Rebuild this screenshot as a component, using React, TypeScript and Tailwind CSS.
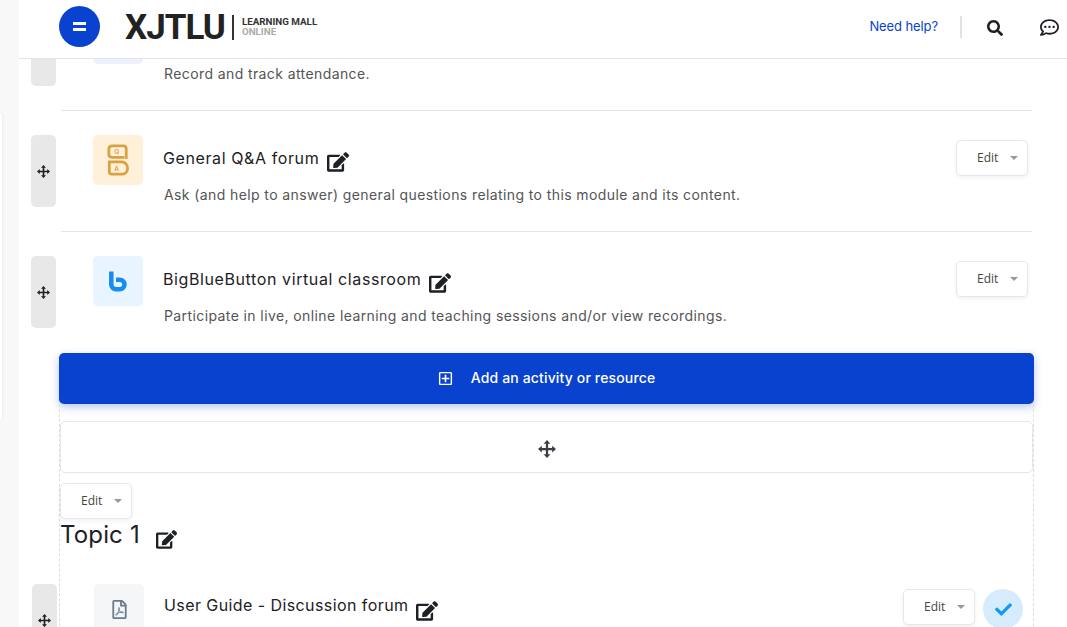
import React from "react";
import { FaEdit, FaSearch, FaRegCommentDots, FaCheck, FaRegPlusSquare, FaRegFilePdf } from "react-icons/fa";

const font = "font-['Inter',sans-serif]";

const MoveIcon = ({ size = 14 }: { size?: number }) => (
  <svg width={size} height={size} viewBox="0 0 16 16" fill="currentColor">
    <path d="M8 0 11 3.4H9V7h3.6V5L16 8l-3.4 3V9H9v3.6h2L8 16l-3-3.4h2V9H3.4v2L0 8l3.4-3v2H7V3.4H5z" />
  </svg>
);

const EditButton = () => (
  <div className="flex h-[36px] w-[72px] shrink-0 items-center rounded-[5px] border border-[#e6e6f0] bg-white pl-[20px] text-[12px] text-[#444] shadow-[0_2px_4px_rgba(0,0,0,0.06)]">
    <span className="font-['Open_Sans',sans-serif]">Edit</span>
    <span className="ml-[12px] h-0 w-0 border-x-[4px] border-t-[4px] border-x-transparent border-t-[#999]" />
  </div>
);

const QaIcon = () => (
  <svg width="22" height="32" viewBox="0 0 24 34" fill="none" stroke="#d9a044" strokeWidth="3">
    <path d="M19 14H5.500C3 14 2 12.500 2 11V5c0-2 1.500-3.500 3.500-3.500H18c2 0 3 1.500 3 3.500V16" />
    <path d="M5 32.500h11c4 0 6.500-3 6.500-6.500S20 19 16 19H2.500v10.500c0 2 1 3 2.500 3z" />
    <text x="8" y="10.500" fontSize="7" stroke="none" fill="#d9a044" fontFamily="Inter" fontWeight="600">Q</text>
    <text x="8" y="29" fontSize="7" stroke="none" fill="#d9a044" fontFamily="Inter" fontWeight="600">A</text>
  </svg>
);

const BbbIcon = () => (
  <svg width="18" height="21" viewBox="0 0 18 20" fill="none" stroke="#148cf2" strokeWidth="4.500">
    <path d="M2.300 0v13c0 3 2 4.700 4.700 4.700h3.500c3 0 5-2 5-4.700s-2-4.800-5-4.800H7" />
  </svg>
);

const PdfIcon = () => <FaRegFilePdf className="text-[#6a7a8c]" size={19} />;

interface RowProps {
  iconBg: string;
  icon?: React.ReactNode;
  title?: string;
  titleClass?: string;
  desc?: string;
  divider?: boolean;
  done?: boolean;
}

const Row: React.FC<RowProps> = ({ iconBg, icon, title, titleClass = "mt-[1px] tracking-[0.6px]", desc, divider = true, done }) => (
  <div className="flex">
    <div className="mt-[24px] flex h-[72px] w-[25px] shrink-0 items-center justify-center rounded-[5px] bg-[#e8e8e8] text-[#1d2125]">
      <MoveIcon size={13} />
    </div>
    <div className={`ml-[5px] flex h-[121px] flex-1 pl-[32px] pr-[4px] ${divider ? "border-b border-[#e3e3e8]" : ""}`}>
      <div className={`mt-[24px] flex h-[50px] w-[50px] shrink-0 items-center justify-center rounded-[5px] ${iconBg}`}>
        {icon}
      </div>
      <div className="ml-[20px] mt-[24px] min-w-0 flex-1">
        <div className="flex h-[44px] items-center text-[16px] text-[#1d2125]">
          {title && (
            <>
              <span className={titleClass}>{title}</span>
              <FaEdit className="ml-[8px] mt-[9px] text-[#1d2125]" size={22} />
            </>
          )}
        </div>
        {desc && <p className="ml-[1px] mt-[4px] text-[14px] leading-[24px] tracking-[0.4px] text-[#555]">{desc}</p>}
      </div>
      {title && (
        <div className="mt-[29px] flex items-start gap-[8px]">
          <EditButton />
          {done && (
            <div className="flex h-[40px] w-[40px] items-center justify-center rounded-full bg-[#d6ecfc] text-[#0f9bf2]">
              <FaCheck size={17} />
            </div>
          )}
        </div>
      )}
    </div>
  </div>
);

export default function App() {
  return (
    <div className={`flex h-[627px] w-[1067px] overflow-hidden bg-white ${font}`}>
      {/* left strip */}
      <div className="w-[19px] shrink-0 bg-[#f8f8f8] pt-[113px]">
        <div className="h-[307px] w-[2px] rounded-r-[2px] bg-white shadow-[0_0_3px_rgba(0,0,0,0.12)]" />
      </div>

      <div className="flex min-w-0 flex-1 flex-col">
        {/* header */}
        <header className="relative z-10 flex h-[59px] shrink-0 items-center border-b border-[#e4e4e4] bg-white pb-[5px] pl-[40px]">
          <div className="flex h-[41px] w-[41px] flex-col items-center justify-center gap-[3px] rounded-full bg-[#0842ce]">
            <span className="h-[3px] w-[13px] bg-white" />
            <span className="h-[3px] w-[13px] bg-white" />
          </div>
          <div className="ml-[25px] mt-[1px] flex items-center">
            <span className="font-['Roboto',sans-serif] text-[35px] font-bold leading-none tracking-[-1px] text-[#222]">XJTLU</span>
            <span className="ml-[7px] h-[25px] w-[2px] bg-[#333]" />
            <div className="ml-[8px] font-['Roboto',sans-serif] text-[9.800px] font-bold leading-[10px]">
              <div className="text-[#333]">LEARNING MALL</div>
              <div className="text-[#aaa]">ONLINE</div>
            </div>
          </div>
          <span className="ml-auto text-[13px] tracking-[-0.1px] text-[#0842ce]">Need help?</span>
          <span className="ml-[22px] h-[22px] w-[2px] bg-[#e2e2e2]" />
          <FaSearch className="ml-[25px] mt-[2px] text-[#1d2125]" size={16} />
          <FaRegCommentDots className="ml-[37px] mr-[8px] mt-[2px] text-[#1d2125]" size={19} />
        </header>

        {/* course content, scrolled */}
        <main className="flex-1 overflow-hidden">
          <div className="-mt-[69px] ml-[12px] w-[1001px]">
            <Row iconBg="bg-[#eef0ff]" desc="Record and track attendance." />
            <Row iconBg="bg-[#fff1d9]" icon={<QaIcon />} title="General Q&A forum" desc="Ask (and help to answer) general questions relating to this module and its content." />
            <Row iconBg="bg-[#e8f4ff]" icon={<BbbIcon />} title="BigBlueButton virtual classroom" desc="Participate in live, online learning and teaching sessions and/or view recordings." divider={false} />
          </div>

          <div className="ml-[40px] w-[975px]">
            <div className="flex h-[51px] items-center justify-center rounded-[5px] bg-[#0842ce] pb-[3px] text-[14px] font-medium tracking-[0.15px] text-white shadow-[0_3px_8px_rgba(8,66,206,0.3)]">
              <FaRegPlusSquare className="mt-[3px]" size={15} />
              <span className="ml-[18px]">Add an activity or resource</span>
            </div>
            <div className="border-x border-dashed border-[#ddd] pt-[17px]">
              <div className="flex h-[52px] items-center justify-center rounded-[5px] border border-[#e6e6f0] bg-white pt-[4px] text-[#3a3f45]">
                <MoveIcon size={18} />
              </div>
              <div className="mt-[10px]">
                <EditButton />
              </div>
              <div className="flex h-[36px] items-center text-[24px] leading-none tracking-[0.15px] text-[#1d2125]">
                <span className="-mt-[4px]">Topic 1</span>
                <FaEdit className="ml-[16px] mt-[4px]" size={21} />
              </div>
              <div className="-ml-[28px] mr-[6px] mt-[5px]">
                <Row
                  iconBg="bg-[#f5f6f8]"
                  icon={<PdfIcon />}
                  title="User Guide - Discussion forum"
                  titleClass="-mt-[2px] tracking-[0.42px]"
                  divider={false}
                  done
                />
              </div>
            </div>
          </div>
        </main>
      </div>
    </div>
  );
}
